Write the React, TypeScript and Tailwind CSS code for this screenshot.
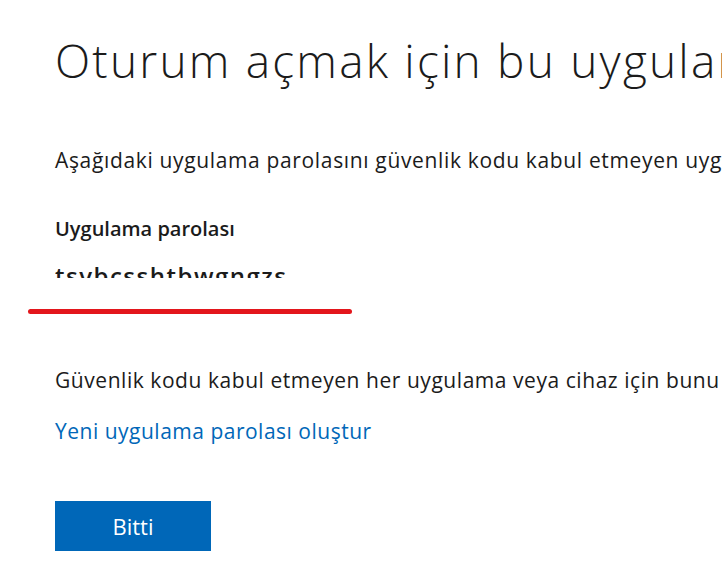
export default function App() {
  return (
    <div className="h-[567px] w-[722px] overflow-hidden bg-white text-[#1b1b1b] [font-family:'Open_Sans',sans-serif]">
      <div className="pl-[55px]">
        <h1 className="mt-[32px] whitespace-nowrap text-[46px] font-light leading-[56px] tracking-[2.2px]">
          Oturum açmak için bu uygulama parolasını kullanın
        </h1>
        <p className="mt-[58px] whitespace-nowrap text-[21px] leading-[28px] tracking-[0.65px]">
          Aşağıdaki uygulama parolasını güvenlik kodu kabul etmeyen uygulamada oturum açmak için kullanın.
        </p>
        <div className="mt-[42px] text-[20px] font-semibold leading-[26px]">Uygulama parolası</div>
        <div className="mt-[22px] h-[14px] overflow-hidden">
          <div className="text-[24px] font-semibold leading-[24px] tracking-[1.5px]">tsvbcsshtbwgngzs</div>
        </div>
      </div>
      <div className="ml-[28px] mt-[31px] h-[5px] w-[324px] rounded-full bg-[#e3161c]" />
      <div className="pl-[55px]">
        <p className="mt-[52px] whitespace-nowrap text-[21px] leading-[28px] tracking-[0.55px]">
          Güvenlik kodu kabul etmeyen her uygulama veya cihaz için bunu yapmanız gerekebilir.
        </p>
        <a href="#" className="mt-[23px] block whitespace-nowrap text-[21px] leading-[28px] tracking-[0.5px] text-[#0067b8]">
          Yeni uygulama parolası oluştur
        </a>
        <button className="mt-[56px] h-[50px] w-[156px] bg-[#0067b8] text-[22px] text-white">Bitti</button>
      </div>
    </div>
  )
}
